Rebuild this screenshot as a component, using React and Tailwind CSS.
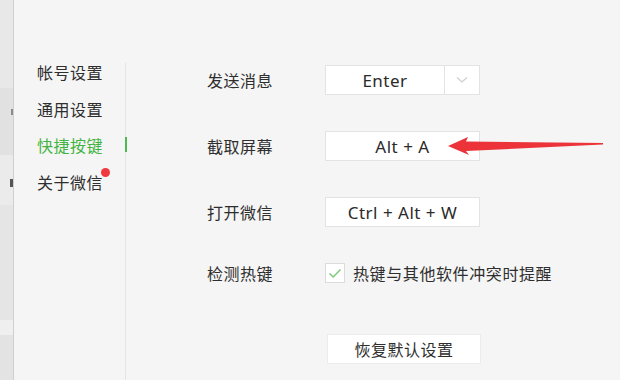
import React from "react";

const cjk = { fontFamily: '"Noto Sans CJK SC", "Noto Sans", sans-serif' };

function NavItem({ label, active, dot }) {
  return (
    <div className="h-[36.5px] flex items-center">
      <span
        className={
          "relative text-[16px] tracking-[0.5px] leading-none " +
          (active ? "text-[#43b443]" : "text-[#2e2e2e]")
        }
      >
        {label}
        {dot && (
          <span className="absolute -right-[7px] -top-[6px] w-[9px] h-[9px] rounded-full bg-[#f0383f]" />
        )}
      </span>
    </div>
  );
}

function KeyBox({ children, dropdown }) {
  return (
    <div className="w-[155px] h-[30px] bg-white border border-[#e3e3e3] flex">
      <div
        className="flex-1 flex items-center justify-center text-[17px] text-[#2a2a2a] leading-none"
        style={{ fontFamily: '"Noto Sans", sans-serif' }}
      >
        {children}
      </div>
      {dropdown && (
        <div className="w-[35px] border-l border-[#e3e3e3] flex items-center justify-center">
          <svg width="12" height="8" viewBox="0 0 12 8">
            <path d="M1 1.5 L6 6 L11 1.5" fill="none" stroke="#cfcfcf" strokeWidth="1.3" />
          </svg>
        </div>
      )}
    </div>
  );
}

export default function App() {
  return (
    <div className="w-[620px] h-[380px] flex overflow-hidden bg-[#f5f5f5] relative" style={cjk}>
      {/* background strip */}
      <div className="w-[14px] h-full flex flex-col border-r border-[#cfcfcf]">
        <div className="h-[88px] bg-[#e8e8e8]" />
        <div className="h-[67px] bg-[#e1e1e1] flex justify-end items-center">
          <div className="w-[2px] h-[6px] bg-[#8a8a8a] mb-[20px]" />
        </div>
        <div className="h-[50px] bg-[#ebebeb] flex justify-end items-start">
          <div className="w-[3px] h-[8px] bg-[#555] mt-[24px]" />
        </div>
        <div className="h-[115px] bg-[#e5e5e5]" />
        <div className="h-[15px] bg-[#efefef]" />
        <div className="flex-1 bg-[#e3e3e3]" />
      </div>

      {/* sidebar */}
      <div className="w-[113px] h-full flex">
        <div className="flex-1 pl-[23px] pt-[54px] flex flex-col">
          <NavItem label="帐号设置" />
          <NavItem label="通用设置" />
          <NavItem label="快捷按键" active />
          <NavItem label="关于微信" dot />
        </div>
        <div className="w-[3px] flex flex-col items-center">
          <div className="mt-[63px] h-[74px] w-px bg-[#e4e4e4]" />
          <div className="h-[15px] w-[2px] bg-[#4cbb4c]" />
          <div className="flex-1 w-px bg-[#e4e4e4]" />
        </div>
      </div>

      {/* content */}
      <div className="flex-1 pl-[80px] pt-[65px] flex flex-col text-[16px] tracking-[0.5px] text-[#2e2e2e]">
        <div className="flex items-center h-[30px]">
          <div className="w-[118px]">发送消息</div>
          <KeyBox dropdown>Enter</KeyBox>
        </div>
        <div className="flex items-center h-[30px] mt-[36px]">
          <div className="w-[118px]">截取屏幕</div>
          <KeyBox>Alt + A</KeyBox>
        </div>
        <div className="flex items-center h-[30px] mt-[36px]">
          <div className="w-[118px]">打开微信</div>
          <KeyBox>Ctrl + Alt + W</KeyBox>
        </div>
        <div className="flex items-center h-[30px] mt-[31px]">
          <div className="w-[118px]">检测热键</div>
          <div className="w-[20px] h-[20px] bg-white border border-[#dcdcdc] flex items-center justify-center">
            <svg width="14" height="11" viewBox="0 0 14 11">
              <path d="M1.5 5.5 L5.2 9 L12.5 1.5" fill="none" stroke="#7ccb7c" strokeWidth="1.5" />
            </svg>
          </div>
          <span className="ml-[8px] tracking-[0.6px]">热键与其他软件冲突时提醒</span>
        </div>
        <div className="flex h-[30px] mt-[46px] pl-[120px]">
          <div className="w-[154px] h-[30px] bg-white border border-[#ececec] flex items-center justify-center">
            恢复默认设置
          </div>
        </div>
      </div>

      {/* red annotation arrow */}
      <svg
        className="absolute left-[440px] top-[130px]"
        width="170"
        height="30"
        viewBox="440 130 170 30"
      >
        <polygon
          points="448,146 468,137 466,141.5 603,143 603,144.5 466,151 469,155"
          fill="#ec3339"
        />
      </svg>
    </div>
  );
}
